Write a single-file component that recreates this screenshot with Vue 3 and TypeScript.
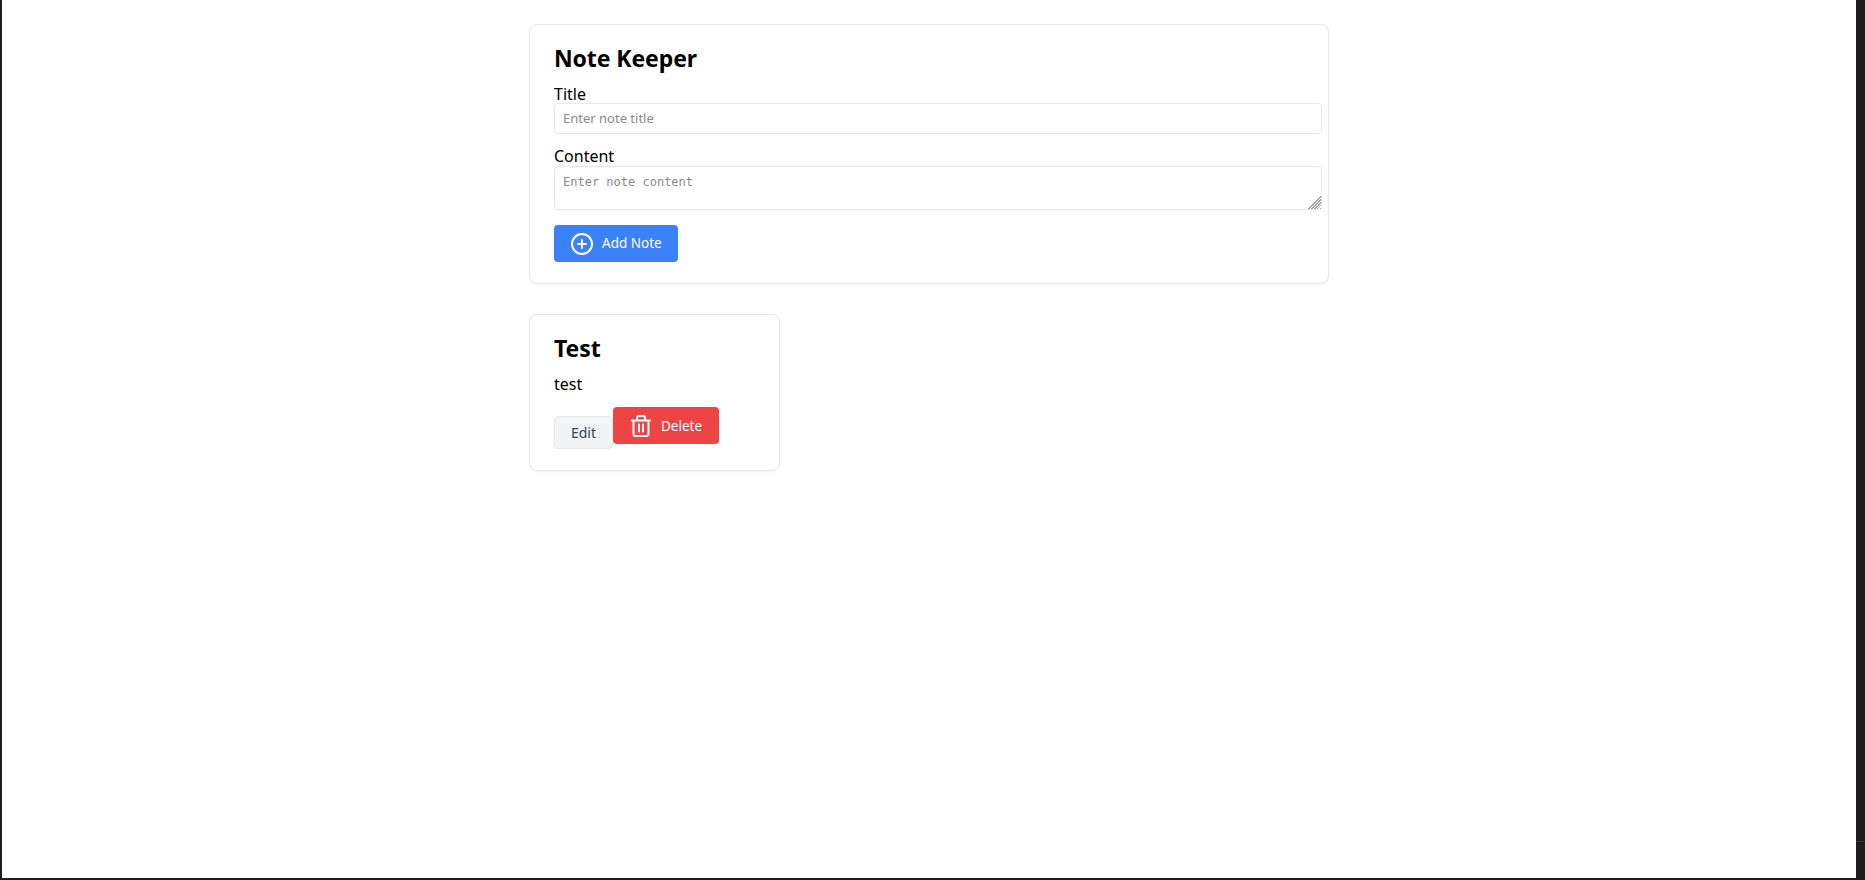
<script setup lang="ts">
interface Note {
  title: string
  body: string
}

const notes: Note[] = [{ title: 'Test', body: 'test' }]
</script>

<template>
  <div class="frame">
    <main class="page">
      <div class="container">
        <section class="card form-card">
          <h1 class="heading">Note Keeper</h1>
          <div class="field field-title">
            <label class="label" for="title">Title</label>
            <input id="title" class="control" type="text" placeholder="Enter note title" />
          </div>
          <div class="field">
            <label class="label label-content" for="content">Content</label>
            <textarea id="content" class="control area" placeholder="Enter note content"></textarea>
          </div>
          <button class="btn btn-blue" type="button">
            <svg class="icon" viewBox="0 0 24 24" fill="none" stroke="currentColor" stroke-width="2" stroke-linecap="round">
              <circle cx="12" cy="12" r="10" />
              <path d="M12 8v8M8 12h8" />
            </svg>
            <span class="btn-label">Add Note</span>
          </button>
        </section>
        <div class="notes">
          <article v-for="note in notes" :key="note.title" class="card note-card">
            <h2 class="heading">{{ note.title }}</h2>
            <p class="note-body">{{ note.body }}</p>
            <div class="actions">
              <button class="btn-edit" type="button">Edit</button>
              <button class="btn btn-red" type="button">
                <svg class="icon" viewBox="0 0 24 24" fill="none" stroke="currentColor" stroke-width="2" stroke-linecap="round" stroke-linejoin="round">
                  <path d="M3 6.5h18M8 6V4a2 2 0 0 1 2-2h4a2 2 0 0 1 2 2v2M19.5 6.5V20a2 2 0 0 1-2 2h-11a2 2 0 0 1-2-2V6.5M10 10.5v7M14 10.5v7" />
                </svg>
                <span>Delete</span>
              </button>
            </div>
          </article>
        </div>
      </div>
    </main>
    <aside class="strip"><div class="strip-line"></div></aside>
  </div>
</template>

<style>
html, body {
  margin: 0;
  background: #1d1d1d;
}
</style>

<style scoped>
.frame {
  display: flex;
  height: 880px;
  padding: 0 0 2px 2px;
  box-sizing: border-box;
  background: #1d1d1d;
  overflow: hidden;
}
.page {
  flex: 1;
  min-width: 0;
  background: #fff;
  padding-top: 24px;
  font-family: "Noto Sans", sans-serif;
  color: #000;
}
.strip {
  width: 9px;
  flex: none;
  padding-top: 841px;
  box-sizing: border-box;
}
.strip-line {
  height: 1px;
  background: #3a3a3a;
}
.container {
  width: 800px;
  margin: 0 auto;
}
.card {
  box-sizing: border-box;
  background: #fff;
  border: 1px solid #e5e7eb;
  border-radius: 8px;
  padding: 24px;
  box-shadow: 0 1px 2px rgba(0, 0, 0, 0.05);
}
.form-card {
  height: 260px;
}
.heading {
  margin: 0 0 18px;
  font-size: 23px;
  line-height: 18px;
  font-weight: 700;
  letter-spacing: -0.1px;
}
.field {
  margin-bottom: 15px;
}
.field-title {
  margin-bottom: 13px;
}
.label {
  display: block;
  font-size: 16px;
  line-height: 18px;
  height: 18px;
}
.label-content {
  height: 19px;
}
.control {
  display: block;
  box-sizing: content-box;
  width: 750px;
  height: 15px;
  padding: 6px 8px 8px;
  margin: 0;
  border: 1px solid #e5e7eb;
  border-radius: 4px;
  background: #fff;
  font-family: "Noto Sans", sans-serif;
  font-size: 13px;
  outline: none;
}
.control::placeholder {
  color: #8a8a8a;
}
.area {
  height: 27px;
  padding: 8px 8px 7px;
  font-family: "DejaVu Sans Mono", monospace;
  font-size: 12px;
  line-height: 14px;
  resize: vertical;
}
.area::-webkit-resizer {
  background:
    linear-gradient(135deg, #fff 56%, transparent 56%),
    repeating-linear-gradient(135deg, #a3a3a3 0 1px, #fff 1px 2px);
}
.btn {
  display: inline-flex;
  align-items: center;
  gap: 8px;
  height: 37px;
  padding: 0 16px;
  border: 0;
  border-radius: 4px;
  color: #fff;
  font-family: "Noto Sans", sans-serif;
  font-size: 13.5px;
}
.btn-label {
  padding-bottom: 2px;
}
.btn-blue {
  background: #3b82f6;
}
.btn-red {
  background: #ef4444;
  padding-right: 17px;
}
.icon {
  width: 24px;
  height: 24px;
  flex: none;
}
.notes {
  margin-top: 30px;
}
.note-card {
  width: 251px;
  height: 157px;
}
.note-body {
  margin: 0 0 14px;
  font-size: 16px;
  line-height: 18px;
}
.actions {
  display: flex;
  align-items: flex-start;
}
.btn-edit {
  height: 33px;
  width: 59px;
  margin-top: 9px;
  padding: 0 0 1px;
  border: 1px solid #e5e7eb;
  border-radius: 4px;
  background: #f3f4f6;
  color: #374151;
  font-family: "Noto Sans", sans-serif;
  font-size: 14px;
}
</style>
